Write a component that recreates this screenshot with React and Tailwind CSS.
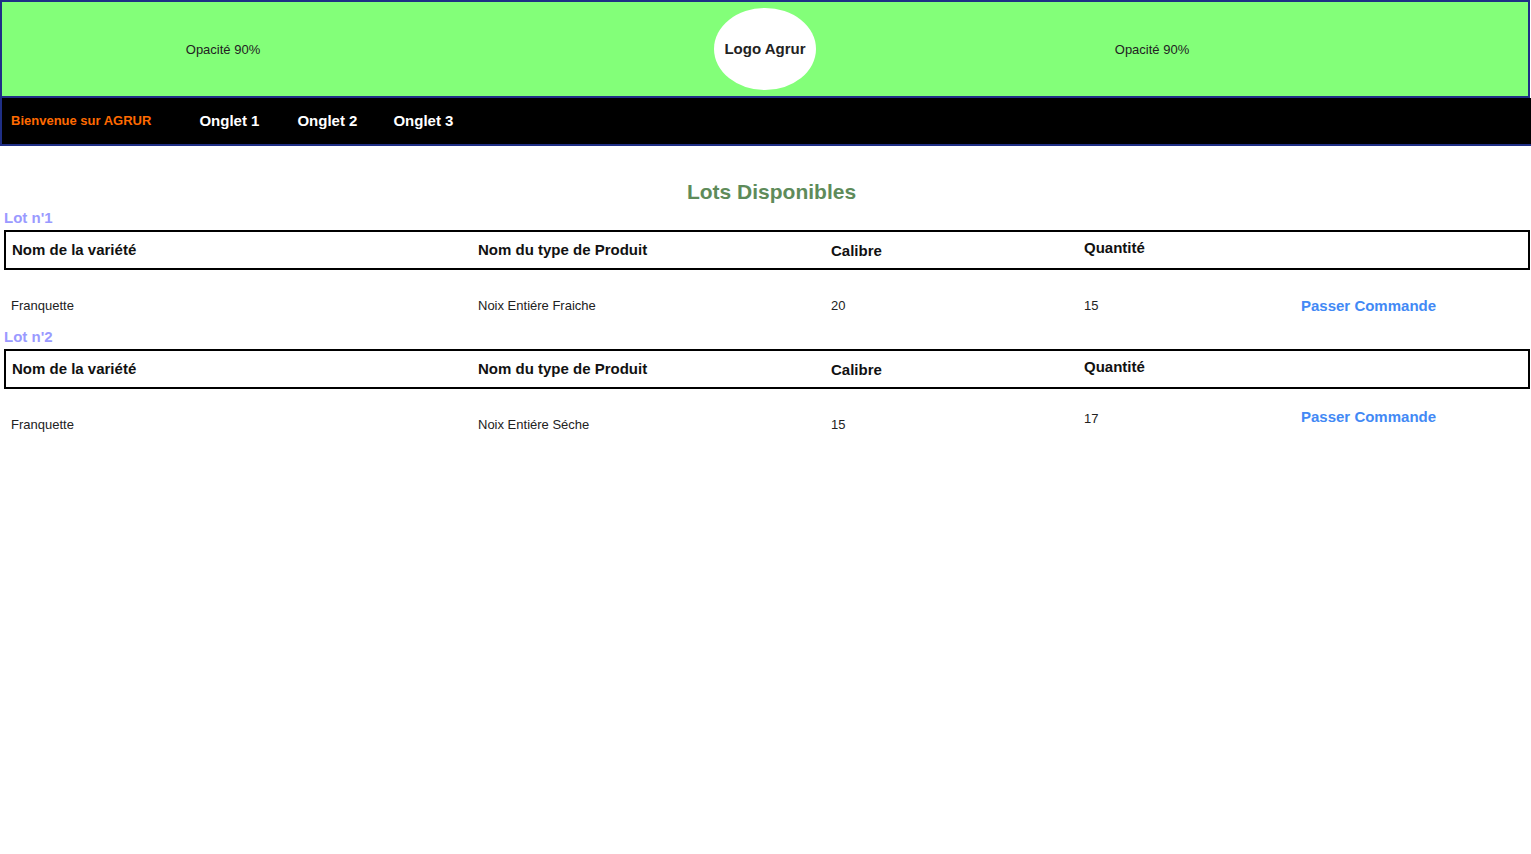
import React from "react";

const lots = [
  {
    id: 1,
    variete: "Franquette",
    type: "Noix Entiére Fraiche",
    calibre: "20",
    quantite: "15",
    shiftQty: "",
    shiftBtn: "",
  },
  {
    id: 2,
    variete: "Franquette",
    type: "Noix Entiére Séche",
    calibre: "15",
    quantite: "17",
    shiftQty: "-translate-y-[6px]",
    shiftBtn: "-translate-y-[8px]",
  },
];

function Lot({ lot }) {
  return (
    <div>
      <div className="pl-[4px] h-[25px] flex items-center pb-[1px] text-[15px] font-bold text-[#9a9aff] leading-none">
        Lot n'{lot.id}
      </div>
      <div className="ml-[4px] mr-[1px] h-[40px] border-2 border-black grid grid-cols-[466px_353px_253px_217px_1fr] px-[6px] text-[15px] font-bold text-[#111]">
        <div className="flex items-center pt-[1px]">Nom de la variété</div>
        <div className="flex items-center">Nom du type de Produit</div>
        <div className="flex items-center pt-[2px]">Calibre</div>
        <div className="flex items-center -translate-y-[2px]">Quantité</div>
        <div />
      </div>
      <div className="ml-[4px] h-[54px] grid grid-cols-[468px_353px_253px_217px_1fr] pl-[7px] text-[13px] text-[#222] items-start pt-[26px]">
        <div>{lot.variete}</div>
        <div className="-ml-[1px]">{lot.type}</div>
        <div className="-ml-[1px]">{lot.calibre}</div>
        <div className={"-ml-[1px] " + lot.shiftQty}>{lot.quantite}</div>
        <div className={"-ml-[1px] -mt-[1px] text-[15px] font-bold text-[#4289f5] " + lot.shiftBtn}>
          <a href="#">Passer Commande</a>
        </div>
      </div>
    </div>
  );
}

export default function App() {
  return (
    <div className="min-h-screen bg-white font-['Liberation_Sans',Arial,sans-serif]">
      <header className="h-[98px] w-[1530px] border-2 border-[#1f2f86] bg-[#83ff79] flex items-center text-[13px] text-[#222]">
        <div className="w-[442px] flex justify-center pt-[2px]">Opacité 90%</div>
        <div className="w-[642px] flex justify-center">
          <div className="w-[102px] h-[82px] rounded-[50%] bg-white flex items-center justify-center text-[15px] font-bold text-[#222]">
            Logo Agrur
          </div>
        </div>
        <div className="w-[132px] flex justify-center pt-[2px]">Opacité 90%</div>
      </header>

      <nav className="h-[48px] border-l-2 border-b-2 border-[#1f2f86] bg-black flex items-center font-bold">
        <span className="ml-[9px] text-[13px] text-[#ff6a00]">Bienvenue sur AGRUR</span>
        <a href="#" className="ml-[48px] text-[15px] text-white">Onglet 1</a>
        <a href="#" className="ml-[38px] text-[15px] text-white">Onglet 2</a>
        <a href="#" className="ml-[36px] text-[15px] text-white">Onglet 3</a>
      </nav>

      <h2 className="mt-[30px] pl-[12px] text-center text-[21px] font-bold text-[#5e8b5a] leading-[32px]">
        Lots Disponibles
      </h2>

      <div className="-mt-[3px]">
        {lots.map((lot) => (
          <Lot key={lot.id} lot={lot} />
        ))}
      </div>
    </div>
  );
}
